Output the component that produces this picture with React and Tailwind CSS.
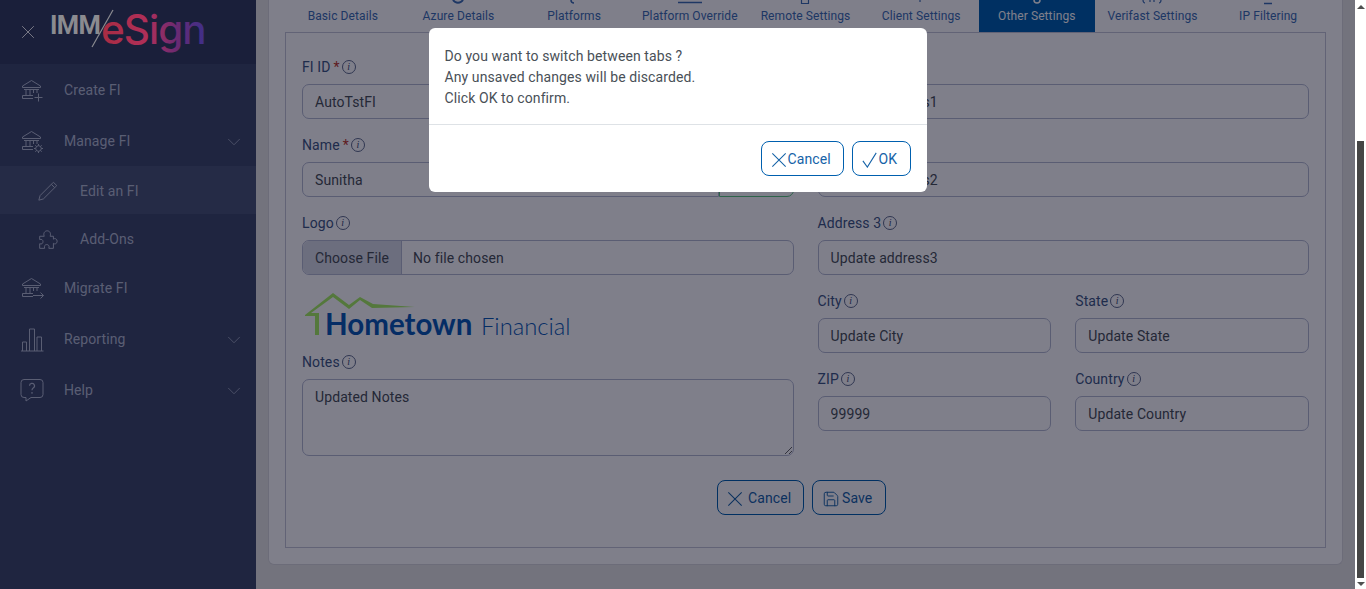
import { ChevronDown, Save } from "lucide-react";

const BankBase = () => (
  <>
    <path d="M2.500 7 11.500 1.500 20.500 7V8.500H2.500Z" />
    <path d="M4 10.500H19" />
    <path d="M6 10.500V16M10 10.500V16M13.500 10.500V14M17 10.500V14" />
    <path d="M2.500 16.500H13M2.500 16.500V19.500H13" />
  </>
);

const Icon = ({ children, className = "w-[24px] h-[24px]" }) => (
  <svg viewBox="0 0 24 24" fill="none" stroke="currentColor" strokeWidth="1" className={className}>
    {children}
  </svg>
);

const CreateIcon = () => (
  <Icon>
    <BankBase />
    <path d="M18.500 14.500V22.500M14.500 18.500H22.500" />
  </Icon>
);

const ManageIcon = () => (
  <Icon>
    <BankBase />
    <circle cx="18.500" cy="18.500" r="2.800" />
    <path d="M18.500 14V15.700M18.500 21.300V23M14 18.500H15.700M21.300 18.500H23M15.300 15.300 16.500 16.500M20.500 20.500 21.700 21.700M21.700 15.300 20.500 16.500M16.500 20.500 15.300 21.700" />
  </Icon>
);

const MigrateIcon = () => (
  <Icon>
    <BankBase />
    <path d="M13 18.500H23.500M20.500 15.500 23.500 18.500 20.500 21.500" />
  </Icon>
);

const ReportIcon = () => (
  <Icon>
    <path d="M1 23H23.500M2.500 23V14H6.500V23M9.500 23V1H14.500V23M17 23V9H21.500V23" />
  </Icon>
);

const HelpIcon = () => (
  <Icon>
    <path d="M4 .5H20A3 3 0 0 1 23 3.500V15.500A3 3 0 0 1 20 18.500H11L6 22V18.500H4A3 3 0 0 1 1 15.500V3.500A3 3 0 0 1 4 .5Z" />
    <path d="M9.500 6.800A2.500 2.500 0 1 1 13.200 9C12.300 9.600 12 10.200 12 11.300M12 13V14.800" strokeWidth="1.200" />
  </Icon>
);

const PencilIcon = () => (
  <Icon className="w-[20px] h-[20px]">
    <path d="M18.500 1.500 22.500 5.500 6.500 21.500 1 23 2.500 17.500ZM16 4 20 8" strokeWidth="1.200" />
  </Icon>
);

const PuzzleIcon = () => (
  <Icon className="w-[20px] h-[20px]">
    <path
      d="M2 7.500H7.500C6 4 8 1 11 1S16 4 14.500 7.500H18.500V11C20 9.500 23 10.500 23 13.500S20 17.500 18.500 16V22H13C14 19 12.500 17.500 10.500 17.500S7 19 8 22H2V16.500C4.500 17.500 6 16 6 14S4.500 10.500 2 11.500Z"
      strokeWidth="1.200"
    />
  </Icon>
);

const CloseIcon = ({ className }) => (
  <svg viewBox="0 0 18 18" fill="none" stroke="currentColor" strokeWidth="1.200" className={className}>
    <path d="M1.500 1.500 16.500 16.500M16.500 1.500 1.500 16.500" />
  </svg>
);

const CheckIcon = ({ className }) => (
  <svg viewBox="0 0 18 18" fill="none" stroke="currentColor" strokeWidth="1.200" className={className}>
    <path d="M1 10 6 17 16 1" />
  </svg>
);

const Info = () => (
  <span className="ml-[2px] -mt-[2px] inline-flex h-[14px] w-[14px] items-center justify-center rounded-full border border-[#5f6d8c] font-['Liberation_Serif',serif] text-[10px] italic leading-none text-[#3c4a70]">
    i
  </span>
);

const menu = [
  { label: "Create FI", icon: <CreateIcon />, h: "h-[51px] pt-[2px]" },
  { label: "Manage FI", icon: <ManageIcon />, h: "h-[51px] pt-[2px]", more: true },
  { label: "Edit an FI", icon: <PencilIcon />, h: "h-[48px] pt-[2px]", sub: true, active: true },
  { label: "Add-Ons", icon: <PuzzleIcon />, h: "h-[49px] pt-[2px]", sub: true },
  { label: "Migrate FI", icon: <MigrateIcon />, h: "h-[51px]" },
  { label: "Reporting", icon: <ReportIcon />, h: "h-[51px]", more: true },
  { label: "Help", icon: <HelpIcon />, h: "h-[51px]", more: true },
];

const tabs = [
  { label: "Basic Details", mark: null },
  { label: "Azure Details", mark: <path d="M3 0a6 6 0 0 0 10 0" strokeWidth="2" /> },
  { label: "Platforms", mark: <path d="M5 0c0 3 2 3 3 3" strokeWidth="1.500" /> },
  { label: "Platform Override", mark: <path d="M-4 2.500h24" strokeWidth="1.500" /> },
  { label: "Remote Settings", mark: <path d="M4.500 0v3.500h7V0" strokeWidth="1.200" /> },
  { label: "Client Settings", mark: <path d="M7 0v2" strokeWidth="1.200" /> },
  { label: "Other Settings", active: true, mark: <path d="M5 0a3 3 0 0 0 6 0" strokeWidth="1.500" /> },
  { label: "Verifast Settings", mark: <path d="M-1 0c0 2 1 3 2 3M17 0c0 2-1 3-2 3M6 0v2M10 0v2" strokeWidth="1.200" /> },
  { label: "IP Filtering", mark: <path d="M4 3.500h8" strokeWidth="1.500" /> },
];

const Label = ({ children, required }) => (
  <div className="mb-[6px] flex h-[21px] items-center text-[14px] tracking-[0.1px] text-[#3f5883]">
    {children}
    {required && <span className="ml-[3px] text-[#c0392b]">*</span>}
    <Info />
  </div>
);

const inputClass =
  "block h-[35px] w-full rounded-[7px] border border-[#b4bad1] bg-white px-3 text-[14px] tracking-[0.1px] text-[#495057] outline-none";

const Field = ({ label, value, required, className = "mb-[16px]" }) => (
  <div className={className}>
    <Label required={required}>{label}</Label>
    <input readOnly value={value} className={inputClass} />
  </div>
);

const HometownLogo = () => (
  <svg viewBox="0 0 270 50" className="ml-[1px] block h-[50px] w-[270px]">
    <path d="M2 24 30 2 46 14 57 6 70 13 112 16 69 17 57 9 46 18 30 6 8 22H16V44H12V25H2Z" fill="#a8f063" />
    <text x="22" y="43.500" fontFamily="Lato, sans-serif" fontWeight="700" fontSize="29.500" fill="#0b5bb5">
      Hometown
    </text>
    <text x="178" y="43.500" fontFamily="Lato, sans-serif" fontWeight="300" fontSize="23.800" fill="#0b5bb5">
      Financial
    </text>
  </svg>
);

const BrandLogo = () => (
  <svg viewBox="0 0 190 48" className="relative z-10 ml-[15px] block h-[48px] w-[190px]">
    <defs>
      <linearGradient id="esign" x1="0" x2="1" y1="0" y2="0">
        <stop offset="0" stopColor="#a82c42" />
        <stop offset="0.45" stopColor="#b02f5a" />
        <stop offset="0.72" stopColor="#6a2a72" />
        <stop offset="1" stopColor="#3d2f8a" />
      </linearGradient>
    </defs>
    <text x="0" y="26" fontFamily="Roboto, sans-serif" fontWeight="700" fontSize="25.500" fill="#8b8b90" letterSpacing="-0.600">
      IMM
    </text>
    <path d="M42 39 63 2" stroke="#8b8b90" strokeWidth="1.200" />
    <text x="51" y="36" fontFamily="Inter, sans-serif" fontWeight="500" fontSize="40.500" fill="url(#esign)" letterSpacing="-1">
      eSign
    </text>
  </svg>
);

const OutlineButton = ({ icon, label, className = "" }) => (
  <button className={`flex h-[35px] items-center rounded-[8px] border border-[#0060af] bg-transparent pl-[9px] pt-[2px] text-[14px] tracking-[0.1px] text-[#1663a8] ${className}`}>
    {icon}
    {label}
  </button>
);

const Scrollbar = () => (
  <div className="flex h-full w-[11px] flex-col items-center bg-white pt-[5px]">
    <svg viewBox="0 0 8 4" className="h-[4px] w-[8px] shrink-0">
      <path d="M4 0 8 4H0Z" fill="#505050" />
    </svg>
    <div className="mt-[132px] h-[437px] w-[7px] shrink-0 bg-[#454545]" />
    <svg viewBox="0 0 8 4" className="mt-[4px] h-[4px] w-[8px] shrink-0">
      <path d="M0 0H8L4 4Z" fill="#505050" />
    </svg>
  </div>
);

const App = () => {
  return (
    <div className="relative flex h-[589px] w-[1366px] overflow-hidden font-['Roboto',sans-serif]">
      <aside className="w-[256px] shrink-0 bg-[#3e4a6b]">
        <div className="flex h-[64px] items-center bg-[#343e5f] text-white">
          <CloseIcon className="ml-[21px] h-[14px] w-[14px] text-[#fff]" />
          <BrandLogo />
        </div>
        {menu.map((item) => (
          <div
            key={item.label}
            className={`flex items-center text-[14px] tracking-[0.1px] text-[#b4bcd1] ${item.h} ${item.active ? "bg-[#4a5677]" : ""}`}
          >
            <div className={`flex items-center justify-center ${item.sub ? "ml-[38px] w-[20px]" : "ml-[20px] w-[24px]"}`}>
              {item.icon}
            </div>
            <span className={item.sub ? "ml-[22px]" : "ml-[20px]"}>{item.label}</span>
            {item.more && <ChevronDown strokeWidth={0.8} className="ml-auto mr-[11px] h-[22px] w-[22px]" />}
          </div>
        ))}
      </aside>

      <main className="h-full min-w-0 flex-1 bg-[#e6e6e5] pl-[12px] pr-[12px]">
        <section className="h-[565px] rounded-b-[6px] border border-t-0 border-[#d8d8dc] bg-white px-[16px]">
          <div className="grid h-[32px] grid-cols-9">
            {tabs.map((tab) => (
              <div
                key={tab.label}
                className={`flex flex-col items-center text-[12px] tracking-[0.1px] ${tab.active ? "bg-[#0060af] text-white" : "text-[#3c6eb3]"}`}
              >
                <svg viewBox="0 0 16 6" fill="none" stroke="currentColor" overflow="visible" className="h-[6px] w-[16px] shrink-0">
                  {tab.mark}
                </svg>
                <span className="leading-[21px]">{tab.label}</span>
              </div>
            ))}
          </div>

          <div className="h-[516px] border border-[#c4c6d6] px-[16px] pt-[24px]">
            <div className="grid grid-cols-2 gap-x-[24px]">
              <div>
                <Field label="FI ID" value="AutoTstFI" required />
                <div className="mb-[16px]">
                  <Label required>Name</Label>
                  <div className="flex">
                    <input readOnly value="Sunitha" className={`${inputClass} rounded-r-none`} />
                    <div className="h-[35px] w-[75px] shrink-0 rounded-r-[7px] border border-[#5cc880]" />
                  </div>
                </div>
                <div className="mb-[16px]">
                  <Label>Logo</Label>
                  <div className="flex h-[35px] items-center overflow-hidden rounded-[7px] border border-[#b4bad1] bg-white text-[14px] tracking-[0.1px] text-[#495057]">
                    <span className="flex h-full w-[99px] items-center justify-center border-r border-[#b4bad1] bg-[#d8dce6] pt-[2px]">
                      Choose File
                    </span>
                    <span className="ml-[11px] pt-[2px]">No file chosen</span>
                  </div>
                </div>
                <div className="mb-[11px] h-[50px]">
                  <HometownLogo />
                </div>
                <Label>Notes</Label>
                <textarea
                  readOnly
                  value="Updated Notes"
                  className="block h-[77px] w-full rounded-[7px] border border-[#b4bad1] bg-white px-3 py-[7px] text-[14px] tracking-[0.1px] text-[#495057] outline-none"
                />
              </div>

              <div>
                <Field label="Address 1" value="Update address1" />
                <Field label="Address 2" value="Update address2" />
                <Field label="Address 3" value="Update address3" />
                <div className="grid grid-cols-2 gap-x-[24px]">
                  <Field label="City" value="Update City" />
                  <Field label="State" value="Update State" />
                  <Field label="ZIP" value="99999" />
                  <Field label="Country" value="Update Country" />
                </div>
              </div>
            </div>

            <div className="mt-[24px] flex justify-center">
              <OutlineButton
                className="mr-[8px] w-[87px] gap-[5px]"
                icon={<CloseIcon className="h-[16px] w-[16px]" />}
                label="Cancel"
              />
              <OutlineButton
                className="mr-[8px] w-[74px] gap-[2px]"
                icon={<Save strokeWidth={1.25} className="h-[18px] w-[18px]" />}
                label="Save"
              />
            </div>
          </div>
        </section>
      </main>

      <Scrollbar />

      <div className="absolute inset-y-0 left-0 right-[11px] flex justify-center bg-[#000015]/50">
        <div className="mt-[28px] h-[164px] w-[498px] rounded-[6px] bg-white">
          <div className="h-[97px] border-b border-[#dee2e6] px-[16px] pt-[18px] text-[14px] leading-[21px] tracking-[0.1px] text-[#495057]">
            <p>Do you want to switch between tabs ?</p>
            <p>Any unsaved changes will be discarded.</p>
            <p>Click OK to confirm.</p>
          </div>
          <div className="flex justify-end gap-[8px] pr-[16px] pt-[16px]">
            <OutlineButton
              className="w-[83px] gap-[1px]"
              icon={<CloseIcon className="h-[16px] w-[16px]" />}
              label="Cancel"
            />
            <OutlineButton
              className="w-[59px] gap-[1px]"
              icon={<CheckIcon className="h-[16px] w-[16px]" />}
              label="OK"
            />
          </div>
        </div>
      </div>
    </div>
  );
};

export default App;
